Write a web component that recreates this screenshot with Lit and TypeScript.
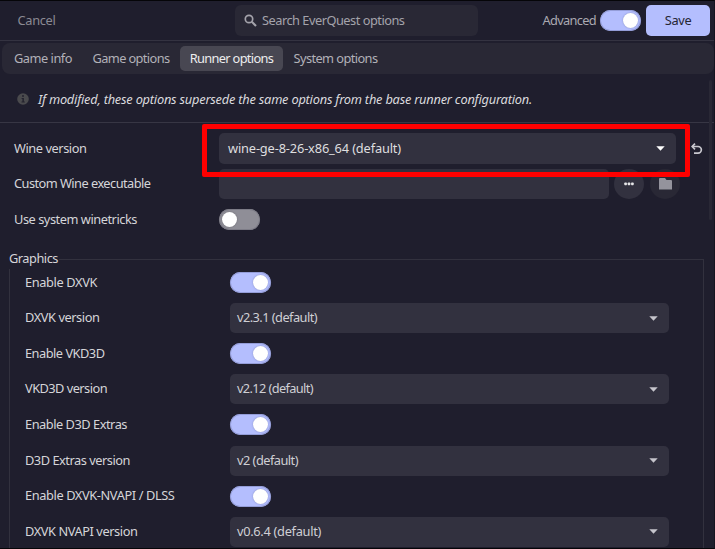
import { LitElement, html, css } from "lit";
import { customElement, property } from "lit/decorators.js";

/** A line of text, tracked so that its advance equals `width`. */
@customElement("ui-text")
class UiText extends LitElement {
  @property() text = "";
  @property({ type: Number }) width = 0;
  static styles = css`
    :host { display: block; white-space: nowrap; padding-bottom: 2px; }
    .line { display: inline-block; vertical-align: top; }
  `;
  firstUpdated() {
    const line = this.renderRoot.querySelector<HTMLElement>(".line")!;
    const natural = line.getBoundingClientRect().width;
    line.style.letterSpacing = `${(this.width - natural) / this.text.length}px`;
  }
  render() { return html`<span class="line">${this.text}</span>`; }
}

const label = (text: string, width: number) => html`<ui-text .text=${text} .width=${width}></ui-text>`;

@customElement("ui-switch")
class UiSwitch extends LitElement {
  @property({ type: Boolean, reflect: true }) on = false;
  static styles = css`
    :host { display: block; box-sizing: border-box; width: 41px; height: 21px; border-radius: 11px; padding: 3px; background: #8f8e97; box-shadow: inset 0 0 0 1px #7d7c87; flex: none; }
    :host([on]) { background: #b4befe; box-shadow: inset 0 0 0 1px #949dd8; }
    .knob { width: 15px; height: 15px; border-radius: 50%; background: #fff; box-shadow: 0 0 2px rgba(0,0,0,.25); }
    :host([on]) .knob { margin-left: 20px; }
  `;
  render() { return html`<div class="knob"></div>`; }
}

@customElement("ui-combo")
class UiCombo extends LitElement {
  @property() value = "";
  @property({ type: Number }) textWidth = 0;
  @property({ type: Boolean, reflect: true }) active = false;
  static styles = css`
    :host { display: flex; align-items: center; justify-content: space-between; box-sizing: border-box; height: 30px; width: 439px; padding: 0 11px 0 7px; border-radius: 5px; background: #32313f; color: #cfcfd4; flex: none; }
    :host([active]) { width: 457px; height: 31px; padding-left: 9px; color: #dededf; }
    .arrow { display: block; color: #c6c5cc; }
    :host([active]) .arrow { color: #fff; }
  `;
  render() {
    return html`${label(this.value, this.textWidth)}
      <svg class="arrow" width="9" height="5" viewBox="0 0 9 5"><path d="M0.3 0.2H8.7L4.5 4.8Z" fill="currentColor"/></svg>`;
  }
}

const tabs: [string, number][] = [["Game info", 58], ["Game options", 77], ["Runner options", 83.5], ["System options", 84]];
const graphics: { label: string; width: number; version?: string; versionWidth?: number }[] = [
  { label: "Enable DXVK", width: 72 },
  { label: "DXVK version", width: 74.5, version: "v2.3.1 (default)", versionWidth: 80 },
  { label: "Enable VKD3D", width: 79.5 },
  { label: "VKD3D version", width: 82, version: "v2.12 (default)", versionWidth: 76 },
  { label: "Enable D3D Extras", width: 102 },
  { label: "D3D Extras version", width: 105, version: "v2 (default)", versionWidth: 61 },
  { label: "Enable DXVK-NVAPI / DLSS", width: 149.5 },
  { label: "DXVK NVAPI version", width: 112.5, version: "v0.6.4 (default)", versionWidth: 84 },
];

@customElement("app-root")
class AppRoot extends LitElement {
  static styles = css`
    :host { display: flex; flex-direction: column; position: relative; box-sizing: border-box; width: 715px; height: 549px; overflow: hidden; background: #1f1e2d; border-top: 1px solid #050508; border-bottom: 1px solid #050508; border-right: 1px solid #151420; font: 12.8px/18px "Noto Sans", sans-serif; color: #d5d5d9; white-space: nowrap; }
    .header { display: flex; align-items: center; height: 39px; border-bottom: 1px solid #343341; padding: 0 4px 0 17.5px; flex: none; }
    .cancel { width: 217.5px; color: #8b8a93; }
    .search { display: flex; align-items: center; gap: 5px; box-sizing: border-box; width: 243px; height: 31px; padding-left: 9px; border-radius: 6px; background: #292835; color: #a4a3ab; }
    .advanced { margin-left: auto; margin-right: 4px; color: #aaa9b1; }
    .save { margin-left: 5px; width: 64px; height: 31px; border-radius: 5px; background: #b4befe; color: #252533; display: grid; place-items: center; }
    .tabs { display: flex; align-items: center; gap: 1px; box-sizing: border-box; height: 31px; margin: 2px 0 0 2px; padding-left: 2px; border-radius: 8px; background: #292835; color: #b2b1b8; flex: none; }
    .tab { display: grid; place-items: center; height: 25px; border-radius: 5px; }
    .tab:nth-child(1) { width: 78px; }
    .tab:nth-child(2) { width: 96px; }
    .tab:nth-child(3) { width: 103px; background: #484752; color: #ededee; }
    .tab:nth-child(4) { width: 103px; }
    .notice { display: flex; align-items: center; gap: 9px; height: 49px; padding: 2px 0 0 17px; box-sizing: border-box; border-bottom: 1px solid #373644; font-style: italic; color: #dadade; flex: none; }
    .notice ui-text { padding-bottom: 0; }
    .options { padding-top: 8px; flex: none; }
    .row { display: flex; align-items: center; height: 35.6px; padding-left: 14px; }
    .label { width: 205px; flex: none; }
    .entry { width: 390px; height: 30px; border-radius: 5px; background: #32313f; }
    .round { display: grid; place-items: center; width: 30px; height: 30px; margin-left: 5px; border-radius: 50%; background: #32313f; }
    .round.dim { margin-left: 6px; background: #292835; }
    .reset { margin-left: 15px; }
    .frame { flex: none; margin: 21px 10px 0 9px; height: 300px; border: 1px solid #32313e; position: relative; padding-top: 5px; }
    .legend { position: absolute; left: -1px; top: -11px; background: #1f1e2d; padding-right: 1px; }
    .frame .row { padding-left: 15px; }
    .scroll { position: absolute; left: 709px; top: 79px; width: 3px; height: 140px; border-radius: 2px; background: #292835; }
    .marker { position: absolute; left: 202px; top: 123px; width: 478px; height: 43px; border: 5px solid #f00; border-radius: 2px; }
    svg { display: block; flex: none; }
  `;
  render() {
    return html`
      <div class="header">
        <div class="cancel">${label("Cancel", 38)}</div>
        <div class="search">
          <svg width="13" height="13" viewBox="0 0 13 13" fill="none" stroke="currentColor"><circle cx="5" cy="5" r="3.7" stroke-width="1.7"/><path d="M7.8 7.8L12 12" stroke-width="2.1"/></svg>
          ${label("Search EverQuest options", 142.5)}
        </div>
        <div class="advanced">${label("Advanced", 53.5)}</div>
        <ui-switch on></ui-switch>
        <div class="save">${label("Save", 26.5)}</div>
      </div>
      <div class="tabs">${tabs.map(([t, w]) => html`<div class="tab">${label(t, w)}</div>`)}</div>
      <div class="notice">
        <svg width="12" height="12" viewBox="0 0 12 12"><circle cx="6" cy="6" r="5.8" fill="#4a4a4d"/><circle cx="6" cy="3.1" r="1" fill="#24232f"/><path d="M4.6 5H6.9V8.5H7.8V9.5H4.5V8.5H5.4V6H4.6Z" fill="#24232f"/></svg>
        ${label("If modified, these options supersede the same options from the base runner configuration.", 494)}
      </div>
      <div class="options">
        <div class="row">
          <div class="label">${label("Wine version", 72.5)}</div>
          <ui-combo active value="wine-ge-8-26-x86_64 (default)" .textWidth=${173}></ui-combo>
          <svg class="reset" width="12" height="12" viewBox="0 0 12 12" fill="none" stroke="#c8c7ce" stroke-width="1.7"><path d="M1.5 3.5H7A3.3 3.3 0 0 1 7 10.2H3"/><path d="M4 .7L1.2 3.5L4 6.3"/></svg>
        </div>
        <div class="row">
          <div class="label">${label("Custom Wine executable", 136.5)}</div>
          <div class="entry"></div>
          <div class="round"><svg width="10" height="4" viewBox="0 0 10 4" fill="#e6e6e8"><rect x=".3" y=".5" width="2.6" height="2.7" rx=".7"/><rect x="3.7" y=".5" width="2.6" height="2.7" rx=".7"/><rect x="7.1" y=".5" width="2.6" height="2.7" rx=".7"/></svg></div>
          <div class="round dim"><svg width="13" height="12" viewBox="0 0 13 12"><path d="M0 1Q0 0 1 0H6L7.5 2H12Q13 2 13 3V11.5H0Z" fill="#94939c"/></svg></div>
        </div>
        <div class="row">
          <div class="label">${label("Use system winetricks", 123)}</div>
          <ui-switch></ui-switch>
        </div>
      </div>
      <div class="frame">
        <div class="legend">${label("Graphics", 49)}</div>
        ${graphics.map((g) => html`<div class="row">
          <div class="label">${label(g.label, g.width)}</div>
          ${g.version
            ? html`<ui-combo .value=${g.version} .textWidth=${g.versionWidth ?? 0}></ui-combo>`
            : html`<ui-switch on></ui-switch>`}
        </div>`)}
      </div>
      <div class="scroll"></div>
      <div class="marker"></div>`;
  }
}
